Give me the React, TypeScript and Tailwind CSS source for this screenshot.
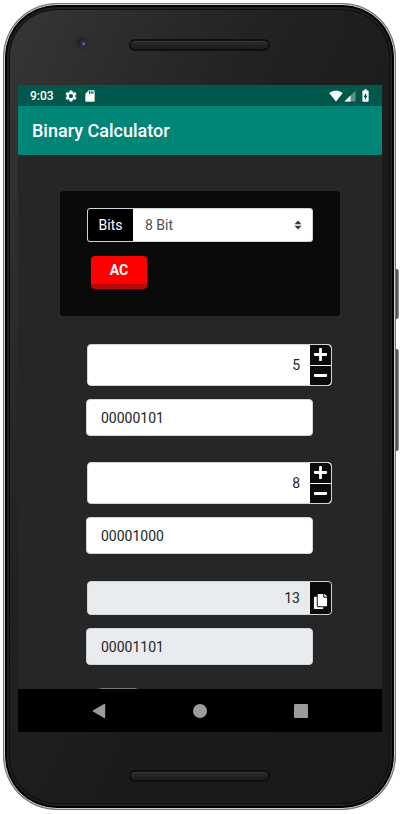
import { useState } from "react";
import type { ReactNode } from "react";
import { FaCopy, FaMinus, FaPlus } from "react-icons/fa";
import {
  MdBatteryChargingFull,
  MdSdStorage,
  MdSettings,
  MdSignalWifi4Bar,
} from "react-icons/md";

function Speaker() {
  return (
    <div className="-ml-px h-3 w-[141px] rounded-full border-2 border-[#0f0f0f] bg-linear-to-b from-[#2b2b2b] to-[#1c1c1c] shadow-[inset_0_1px_0_#383838]" />
  );
}

function StatusBar() {
  return (
    <div className="flex h-[21px] shrink-0 items-center bg-[#00574b] px-3 text-white">
      <span className="w-[34px] text-xs leading-5 font-medium">9:03</span>
      <MdSettings size={14} />
      <MdSdStorage size={14} className="ml-[5px]" />
      <div className="ml-auto flex items-center">
        <MdSignalWifi4Bar size={14} />
        <svg width="12" height="12" viewBox="0 0 12 12" className="ml-[1px]">
          <path d="M0.5 11.5L11.5 0.5V11.5Z" fill="#5d9189" />
          <path d="M0.5 11.5L6.5 5.5V11.5Z" fill="#fff" />
        </svg>
        <MdBatteryChargingFull size={15} className="ml-[2px] -mr-[3px]" />
      </div>
    </div>
  );
}

type NumberFieldProps = {
  label: string;
  value: number;
  readOnly?: boolean;
  onChange?: (value: number) => void;
  children: ReactNode;
};

function NumberField({ label, value, readOnly, onChange, children }: NumberFieldProps) {
  return (
    <div
      className={
        readOnly
          ? "ml-[27px] mr-2 flex h-[34px] overflow-hidden rounded border border-[#ced4da] bg-[#e9ecef]"
          : "ml-[27px] mr-2 flex h-[42px] overflow-hidden rounded border border-[#ced4da] bg-white"
      }
    >
      <input
        aria-label={label}
        inputMode="numeric"
        className="min-w-0 flex-1 bg-transparent pr-[10px] text-right text-sm text-[#212529] outline-none"
        value={value}
        readOnly={readOnly}
        onChange={(e) => onChange?.(Number(e.target.value.replace(/\D/g, "")) & 255)}
      />
      {children}
    </div>
  );
}

function BinaryField({ label, value, muted }: { label: string; value: number; muted?: boolean }) {
  return (
    <div className="mt-[13px] mr-[27px] ml-[26px]">
      <input
        aria-label={label}
        readOnly
        value={(value & 255).toString(2).padStart(8, "0")}
        className={
          muted
            ? "block h-[37px] w-full rounded border border-[#ced4da] bg-[#e9ecef] px-[14px] text-sm text-[#212529] outline-none"
            : "block h-[37px] w-full rounded border border-[#ced4da] bg-white px-[14px] text-sm text-[#212529] outline-none"
        }
      />
    </div>
  );
}

function Stepper({ onStep }: { onStep: (delta: number) => void }) {
  return (
    <div className="flex w-[21px] flex-col gap-px rounded-r bg-white text-white">
      <button
        type="button"
        aria-label="Increase"
        className="flex flex-1 items-center justify-center rounded-tr-sm bg-[#0a0a0a]"
        onClick={() => onStep(1)}
      >
        <FaPlus size={15} />
      </button>
      <button
        type="button"
        aria-label="Decrease"
        className="flex flex-1 items-center justify-center rounded-br-sm bg-[#0a0a0a]"
        onClick={() => onStep(-1)}
      >
        <FaMinus size={15} />
      </button>
    </div>
  );
}

export default function App() {
  const [a, setA] = useState(5);
  const [b, setB] = useState(8);
  const sum = (a + b) & 255;

  return (
    <div className="flex h-screen bg-white pt-[3px] pr-[7px] pb-1 pl-[3px] font-['Roboto',sans-serif]">
      <div className="relative flex min-w-0 flex-1 rounded-[54px] bg-[#747674] p-px">
        <div className="absolute top-[266px] -right-[3px] h-[50px] w-[3px] rounded-r-sm bg-linear-to-r from-[#3a3a3a] to-[#999]" />
        <div className="absolute top-[346px] -right-[3px] h-[102px] w-[3px] rounded-r-sm bg-linear-to-r from-[#3a3a3a] to-[#999]" />
        <div className="flex min-w-0 flex-1 rounded-[53px] border border-[#d0d2d0] bg-black p-[2px]">
          <div className="flex min-w-0 flex-1 flex-col rounded-[50px] border-2 border-[#1f2020] bg-[#0d0d0d] p-px">
            <div className="flex min-h-0 min-w-0 flex-1 flex-col rounded-[47px] bg-[linear-gradient(115deg,#363636_0%,#222_35%,#1b1b1b_60%,#191919_100%)] pr-[7px] pl-2">
              <div className="grid h-[75px] shrink-0 grid-cols-[1fr_141px_1fr] pt-[29px]">
                <div className="-mt-[3px] ml-[57px] flex h-[14px] w-[14px] items-center justify-center rounded-full bg-[#2b292b]">
                  <div className="h-2 w-2 rounded-full bg-[radial-gradient(circle_at_70%_60%,#9a7585_0%,#35304a_25%,#1b1a24_75%)]" />
                </div>
                <Speaker />
              </div>

              <div className="flex min-h-0 flex-1 flex-col">
                <StatusBar />
                <header className="flex h-[49px] shrink-0 items-center bg-[#008577] px-[14px]">
                  <h1 className="text-lg leading-6 font-medium text-white">Binary Calculator</h1>
                </header>

                <main className="min-h-0 flex-1 overflow-y-auto bg-[#262626] px-[42px] pt-9 [scrollbar-width:none]">
                  <section className="h-[125px] rounded bg-[#0a0a0a] px-[27px] pt-[17px]">
                    <div className="relative flex h-[34px] overflow-hidden rounded-[3px] border border-[#ced4da] bg-white">
                      <label
                        htmlFor="bits"
                        className="flex w-[45px] items-center justify-center bg-black text-sm text-white"
                      >
                        Bits
                      </label>
                      <select
                        id="bits"
                        className="min-w-0 flex-1 appearance-none bg-transparent px-3 text-sm text-[#495057] outline-none"
                      >
                        <option>8 Bit</option>
                      </select>
                      <svg
                        width="8"
                        height="10"
                        viewBox="0 0 8 10"
                        className="pointer-events-none absolute top-[11px] right-[10px]"
                      >
                        <path d="M4 0.5L7.5 4.3H0.5ZM4 9.5L0.5 5.7H7.5Z" fill="#343a40" />
                      </svg>
                    </div>
                    <button
                      type="button"
                      className="mt-[14px] ml-1 h-[33px] w-14 rounded border-b-5 border-[#b80808] bg-[#ff0000] text-sm font-bold text-white"
                      onClick={() => {
                        setA(0);
                        setB(0);
                      }}
                    >
                      AC
                    </button>
                  </section>

                  <div className="mt-7">
                    <NumberField label="First number" value={a} onChange={setA}>
                      <Stepper onStep={(d) => setA((a + d) & 255)} />
                    </NumberField>
                    <BinaryField label="First number in binary" value={a} />
                  </div>

                  <div className="mt-[26px]">
                    <NumberField label="Second number" value={b} onChange={setB}>
                      <Stepper onStep={(d) => setB((b + d) & 255)} />
                    </NumberField>
                    <BinaryField label="Second number in binary" value={b} />
                  </div>

                  <div className="mt-[27px]">
                    <NumberField label="Result" value={sum} readOnly>
                      <button
                        type="button"
                        aria-label="Copy result"
                        className="flex w-[21px] items-center justify-center bg-[#0a0a0a] pt-[6px] text-white"
                      >
                        <FaCopy size={15} />
                      </button>
                    </NumberField>
                    <BinaryField label="Result in binary" value={sum} muted />
                  </div>

                  <button
                    type="button"
                    aria-label="Operation"
                    className="mt-[23px] ml-[37px] block h-8 w-[42px] rounded-sm border border-[#777] bg-[#0a0a0a]"
                  />
                </main>

                <nav className="flex h-[43px] shrink-0 items-center justify-center gap-[87px] bg-black pr-px">
                  <button type="button" aria-label="Back">
                    <svg width="14" height="16" viewBox="0 0 14 16" fill="#9b9b9b">
                      <path d="M12.5 0.8Q13.2 0.5 13.2 1.4V14.6Q13.2 15.5 12.5 15.2L0.9 8.6Q0.3 8 0.9 7.4Z" />
                    </svg>
                  </button>
                  <button type="button" aria-label="Home" className="h-[14px] w-[14px] rounded-full bg-[#9b9b9b]" />
                  <button type="button" aria-label="Recent apps" className="h-[14px] w-[14px] rounded-[1px] bg-[#9b9b9b]" />
                </nav>
              </div>

              <div className="grid h-[71px] shrink-0 grid-cols-[1fr_141px_1fr] pt-[38px]">
                <div />
                <Speaker />
              </div>
            </div>
          </div>
        </div>
      </div>
    </div>
  );
}
